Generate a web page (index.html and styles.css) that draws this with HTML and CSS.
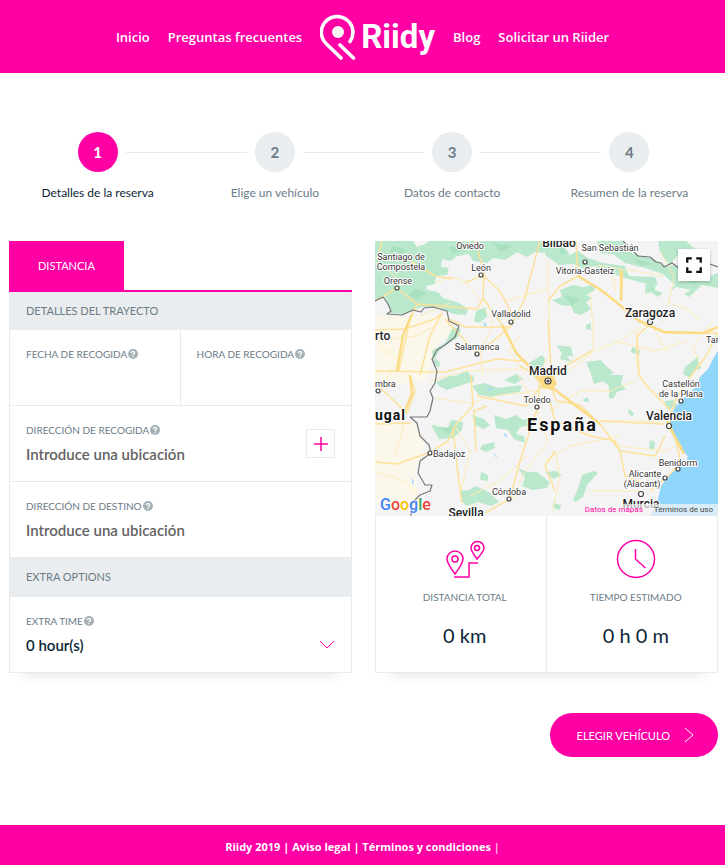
FILE: index.html
```html
<!DOCTYPE html>
<html lang="es">
<head>
<meta charset="utf-8">
<meta name="viewport" content="width=device-width, initial-scale=1">
<title>Riidy</title>
<link rel="stylesheet" href="styles.css">
</head>
<body>
<svg class="sprite" aria-hidden="true">
  <symbol id="help" viewBox="0 0 10 10">
    <circle cx="5" cy="5" r="5" fill="currentColor"/>
    <path d="M3.300 4a1.600 1.400 0 1 1 2.500 1.100Q5 5.500 5 6.200M5 7.200v1" fill="none" stroke="#fff" stroke-width="1.300"/>
  </symbol>
</svg>

<header class="header">
  <nav class="nav">
    <a href="#">Inicio</a>
    <a href="#">Preguntas frecuentes</a>
    <a href="#" class="logo">
      <svg class="logo-mark" viewBox="0 0 38 46" fill="none" stroke="#fff" stroke-width="3.600" stroke-linecap="round">
        <path d="M21 44L6.500 30A15.800 15.800 0 1 1 30 27.500"/>
        <path d="M20 31L33.500 44"/>
        <circle cx="18" cy="18" r="6" fill="#f7f7f7" stroke="none"/>
      </svg>
      <span class="logo-word">Riidy</span>
    </a>
    <a href="#">Blog</a>
    <a href="#">Solicitar un Riider</a>
  </nav>
</header>

<main class="page">
  <ol class="steps">
    <li class="step step-active"><span class="step-row"><span class="step-dot">1</span></span><span>Detalles de la reserva</span></li>
    <li class="step"><span class="step-row"><span class="step-dot">2</span></span><span>Elige un vehículo</span></li>
    <li class="step"><span class="step-row"><span class="step-dot">3</span></span><span>Datos de contacto</span></li>
    <li class="step"><span class="step-row"><span class="step-dot">4</span></span><span>Resumen de la reserva</span></li>
  </ol>

  <form class="booking">
    <section class="column">
      <div class="tabs"><button type="button" class="tab">DISTANCIA</button></div>
      <div class="card">
        <h2 class="section-title">DETALLES DEL TRAYECTO</h2>
        <div class="pair">
          <div class="field">
            <label for="date">FECHA DE RECOGIDA <svg class="help"><use href="#help"/></svg></label>
            <input id="date" type="text">
          </div>
          <div class="field">
            <label for="time">HORA DE RECOGIDA <svg class="help"><use href="#help"/></svg></label>
            <input id="time" type="text">
          </div>
        </div>
        <div class="field-row">
          <div class="field">
            <label for="from">DIRECCIÓN DE RECOGIDA <svg class="help"><use href="#help"/></svg></label>
            <input id="from" type="text" placeholder="Introduce una ubicación">
          </div>
          <button type="button" class="add" aria-label="Añadir parada">
            <svg viewBox="0 0 16 16" stroke="currentColor" stroke-width="1.500"><path d="M8 1v14M1 8h14"/></svg>
          </button>
        </div>
        <div class="field-row">
          <div class="field">
            <label for="to">DIRECCIÓN DE DESTINO <svg class="help"><use href="#help"/></svg></label>
            <input id="to" type="text" placeholder="Introduce una ubicación">
          </div>
        </div>
        <h2 class="section-title section-title-tall">EXTRA OPTIONS</h2>
        <div class="field">
          <label for="extra">EXTRA TIME <svg class="help"><use href="#help"/></svg></label>
          <div class="select">
            <select id="extra"><option>0 hour(s)</option><option>1 hour(s)</option><option>2 hour(s)</option></select>
            <svg class="chevron" viewBox="0 0 16 10" fill="none" stroke="currentColor"><path d="M1 1l7 7 7-7"/></svg>
          </div>
        </div>
      </div>
    </section>

    <section class="column">
      <div class="map">
        <svg class="map-canvas" viewBox="0 0 343 275" preserveAspectRatio="xMidYMid slice">
          <rect width="343" height="275" fill="#f4f4f4"/>
          <g fill="#fbf7ea">
            <path d="M0 74l30 2 40-3 10 14-20 20-8 33-52 6z"/>
            <path d="M0 180l40 2 10 20-10 30 5 30-45 0z"/>
          </g>
          <g fill="#b9e8cc">
            <path d="M0 0H38L42 6L50 3L54 0H173V12L160 11L152 16L142 11L130 19L118 17L112 22L98 20L94 13L82 15L76 20L67 18L66 26L74 27L72 34L61 35L60 43L51 45L52 49L63 51L68 57L84 62L93 68L91 74L79 73L69 69L58 66L47 66L38 69L28 73L15 72L16 67L9 56L0 60z"/>
            <path d="M170 0H182L195 14L203 10L213 17L228 22L250 25L254 35L280 36L283 44L268 42L246 36L232 30L219 25L210 28L199 23L184 24L170 14z"/>
            <path d="M222 0L247 0L258 13L276 17L291 25L303 24L309 33L335 35L343 32V47L327 44L314 56L309 53L316 49L301 46L293 52L300 44L288 33L270 27L250 22L238 13L225 12z"/>
            <path d="M283 0h28l14 12-22 2-8 10-10-12z"/>
            <path d="M185 49L198 44L208 46L217 44L220 49L211 54L218 57L211 61L216 68L206 74L199 72L196 65L185 64L177 59L187 56"/>
            <path d="M271 39l10-1-1 11 8 3-5 4-7-5-6 2z"/>
            <path d="M181 104l15 2 2 9-6 0 4 6-11-3 2-6z"/>
            <path d="M211 84l5-2v7l-5-1zM257 106l8 3-1 5-8-3z"/>
            <path d="M211 121l15-2 4 5 9 8-5 2 5 8-10-2-10 3-4-13z"/>
            <path d="M308 133l2-7 14-11-1 9 4 3-9 3-3 7z"/>
            <path d="M101 70l10-4 1 10-8 6-5-2z"/>
            <path d="M78 86l8 2-3 8-11 7-8 7-4 8 5 3-1 6-5-4-2-13 14-9z"/>
            <path d="M154 122l13-8 3 4-3 13-9-3zM82 134l11-4 3 9-12 0z"/>
            <path d="M61 141l14-6 23-1 1 6-15 5-12 4-8-4z"/>
            <path d="M97 145l12-3 14 5 24-3-2 7-15 2-12 3-14-2z"/>
            <path d="M129 139l12-6 7 5-9 5z"/>
            <path d="M56 184l17 3 3-8 12 2-1 8-9 8-14 1z"/>
            <path d="M97 174l12 4 6 6-6 4-9-4z"/>
            <path d="M119 174l12 4 10-4 7 5 12-3-3 8-12 2-4 7 8 2 1 7-11-4-6-9-12-2z"/>
            <path d="M107 204l12-3 1 6-9 4-6-3zM106 231l7 3 0 6-8-1z"/>
            <path d="M85 250l10-1 5-4 14 6 10 10-8 4-13-4-11 4-6-5z"/>
            <path d="M143 227l9 4 10 0 13 10-3 6-14 2-11-4 3-8z"/>
            <path d="M231 134l17 0-2 9 5 5-9 3-4 7-4-1 0-12-6-5z"/>
            <path d="M289 160l10-1 4 7-10 2zM275 199l5 2-1 8-5-2z"/>
            <path d="M207 234l12-4 4 2-11 12-4 12-7 5-3-2 6-14z"/>
            <path d="M170 231l11-1 6 4-9 4zM178 262l8 2-1 5-7-2z"/>
            <path d="M208 158l5-2 1 5-5 0zM254 168l5 4-2 4-4-5z"/>
          </g>
          <g fill="#8bd3a8" opacity=".35">
            <path d="M18 5l14 4-8 5-10-3zM40 48l12 4-10 7-8-5zM74 5l14 3-10 5zM118 2l20 3-12 6zM186 4l8 7-10 3zM258 17l20 6-12 2zM310 38l18 2-10 3zM190 55l15 2-8 8zM66 187l15-2-9 8z"/>
          </g>
          <path fill="#90d5fa" d="M343 110L338 118L333 128L325 136L322 145L308 158L299 168L294 178L296 192L305 205L313 216L308 224L295 233L286 245L283 258L275 275H343z"/>
          <g fill="#a8dcff"><path d="M108 80l4 4-2 3zM110 148l8-1-3 3zM128 191l4 3-1 3zM119 212l3 3-1 2zM37 236l2 5-2 3z"/></g>
          <g fill="none" stroke="#fdedb8" stroke-width="1">
            <path d="M0 20L20 35L22 47M60 42L75 36L90 40L102 55L118 82M45 75L75 62M130 60L173 48M118 85L105 110L108 134M0 100L40 95L60 85M5 105L25 120L10 140M55 140L90 130L145 128M150 134L135 110L144 94"/>
            <path d="M173 20L174 80L175 115L160 136M218 110L218 85L215 52M218 110L245 100L270 83M262 90L261 120L264 134M218 112L200 125L176 138M240 50L238 35M294 62L312 68L325 80M293 65L299 36L285 10M338 80L318 105L325 125M222 24L290 35M279 88L293 112M240 100L280 110L312 100"/>
            <path d="M60 157L95 162L120 155L160 150M80 185L95 210L86 250M143 134L160 165L173 200L150 230L137 258M175 170L205 150L235 150L260 140M230 180L295 180M240 205L290 210L300 205M170 220L195 205L245 195M95 255L125 240L152 215M0 230L30 240L45 255M20 215L30 180M178 270L185 235L180 210M215 250L265 250"/>
          </g>
          <g fill="none" stroke="#fce29b" stroke-width="1.500" stroke-linejoin="round">
            <path d="M7 0L2 18M22 47L42 63L102 68L108 57L109 31L100 0M0 60L22 47M42 63L35 78L24 129M0 89L30 88L60 78L67 72M0 130L70 131L122 118L147 120M45 134L55 95L67 72M74 78L90 86L135 86L149 60L165 0M108 57L127 84L142 113L155 125M135 86L110 107L102 113L70 78M35 20L60 35L78 38M90 42L108 34L125 50L138 75M0 142L32 172L40 150L35 134M0 183L36 182M0 221L22 223L53 212M54 212L73 200L82 182L98 165L96 134M78 187L82 225L87 262M101 210L99 170L112 165M102 155L151 165L162 150L173 140"/>
            <path d="M173 140L145 125M173 140L190 125L217 110M203 35L222 47L240 60L265 80L290 92L343 92M203 35L185 45L173 60M203 35L201 0M245 28L246 55M275 83L262 95L264 134M175 145L182 160L205 164L225 183L245 210L250 235L275 245M175 160L180 180L215 195L240 200L245 210L280 215L290 195M225 180L289 183M173 80L177 143M264 134L272 145L296 170M292 184L307 207M180 210L170 225L180 250M165 134L163 165L145 220L135 258L110 272"/>
            <path d="M343 92L331 115L315 136L300 160L294 180L302 204L306 222L291 237L275 250"/>
          </g>
          <g fill="none" stroke="#fbdb84" stroke-width="2.500">
            <path d="M203 35L226 49L246 65L264 80L289 91L329 92L343 86M246 60L247 30M37 73L28 94L22 130M127 84L142 113L157 128L164 140M35 134L37 153L27 177M292 180L301 198L309 213M175 145L225 183"/>
          </g>
          <path d="M164 137l7-4 8 3 3 7-5 6-10-2z" fill="#fbdb84"/>
          <g fill="none" stroke="#777" stroke-width="1.200" stroke-linejoin="round">
            <path d="M0 60L8 56L13 63L16 70L12 73L27 74L38 69L46 71L49 67L58 66L72 70L74 80L84 85L80 96L70 104L62 109L57 118L62 130L60 142L55 150L58 157L55 170L52 176L35 176L42 182L45 195L54 204L56 212L45 220L43 232L50 244L57 244L55 250L45 254L37 262L36 275"/>
            <path d="M248 0L258 10L263 15L275 16L281 21L286 22L289 26L297 22L305 28L322 28L332 22L343 26"/>
          </g>
          <g fill="#fff" stroke="#444" stroke-width="1.200">
            <circle cx="106" cy="34" r="2"/><circle cx="22" cy="47" r="2"/><circle cx="136" cy="81" r="2"/><circle cx="102" cy="113" r="2"/><circle cx="210" cy="21" r="2"/><circle cx="275" cy="81" r="2.500"/><circle cx="162" cy="166" r="2"/><circle cx="3" cy="150" r="2"/><circle cx="306" cy="160" r="2"/><circle cx="294" cy="185" r="2.500"/><circle cx="303" cy="228" r="2"/><circle cx="290" cy="237" r="2"/><circle cx="266" cy="253" r="2.500"/><circle cx="55" cy="212" r="2"/><circle cx="134" cy="258" r="2"/><circle cx="173" cy="140" r="3"/><circle cx="173" cy="140" r="1" fill="#222"/>
          </g>
          <g class="town">
            <text x="95" y="8">Oviedo</text><text x="26" y="19">Santiago de</text><text x="26" y="29">Compostela</text><text x="106" y="30">León</text><text x="23" y="43">Orense</text><text x="136" y="76">Valladolid</text><text x="102" y="109">Salamanca</text><text x="235" y="10">San Sebastián</text><text x="210" y="33">Vitoria-Gasteiz</text><text x="162" y="162">Toledo</text><text x="306" y="146">Castellón</text><text x="306" y="156">de la Plana</text><text x="303" y="225">Benidorm</text><text x="270" y="236">Alicante</text><text x="267" y="246">(Alacant)</text><text x="134" y="254">Córdoba</text>
            <text class="from-edge" x="0" y="146">mbra</text><text class="from-edge" x="331" y="102">Tar</text><text class="from-edge" x="58" y="216">Badajoz</text>
          </g>
          <g class="city">
            <text x="184" y="6">Bilbao</text><text x="275" y="76">Zaragoza</text><text x="173" y="134">Madrid</text><text x="294" y="179">Valencia</text><text x="266" y="267">Murcia</text><text x="91" y="276">Sevilla</text><text class="from-edge" x="0" y="99">rto</text>
          </g>
          <text class="country neighbour" x="0" y="179">ugal</text>
          <text class="country" x="152" y="190">España</text>
        </svg>
        <button type="button" class="fullscreen" aria-label="Pantalla completa">
          <svg viewBox="0 0 16 16" fill="none" stroke="currentColor" stroke-width="2"><path d="M2 6V2h4M10 2h4v4M14 10v4h-4M6 14H2v-4"/></svg>
        </button>
        <span class="google"><span class="g-blue">G</span><span class="g-red">o</span><span class="g-yellow">o</span><span class="g-blue">g</span><span class="g-green">l</span><span class="g-red">e</span></span>
        <div class="credits"><a href="#" class="credits-data">Datos de mapas</a><a href="#">Términos de uso</a></div>
      </div>
      <div class="card stats">
        <div class="stat">
          <svg class="stat-icon" viewBox="0 0 40 40" fill="none" stroke="currentColor" stroke-width="1.500">
            <path d="M10 35Q2 24 2 20a8 8 0 0 1 16 0Q18 24 10 35z"/><circle cx="10" cy="20" r="3"/>
            <path d="M32 20Q26 12 26 9a6.300 6.300 0 0 1 13 0Q39 12 32 20z"/><circle cx="32" cy="9" r="2.500"/>
            <path d="M9 38H24V24H33"/>
          </svg>
          <span class="stat-label">DISTANCIA TOTAL</span>
          <span class="stat-value">0 km</span>
        </div>
        <div class="stat">
          <svg class="stat-icon" viewBox="0 0 40 40" fill="none" stroke="currentColor" stroke-width="1.500">
            <circle cx="20" cy="20" r="18.500"/><path d="M19.500 10V20L29.500 29"/>
          </svg>
          <span class="stat-label">TIEMPO ESTIMADO</span>
          <span class="stat-value">0 h 0 m</span>
        </div>
      </div>
    </section>

    <div class="actions">
      <button type="submit" class="next">ELEGIR VEHÍCULO
        <svg viewBox="0 0 10 16" fill="none" stroke="currentColor"><path d="M1 1l8 7-8 7"/></svg>
      </button>
    </div>
  </form>
</main>

<footer class="footer">
  <span>Riidy 2019 | <a href="#">Aviso legal</a> | <a href="#">Términos y condiciones</a> <span class="bar">|</span></span>
</footer>
</body>
</html>
```

FILE: styles.css
```css
:root {
  --pink: #ff00a5;
  --grey: #e9edef;
  --line: #e8eaeb;
  --slate: #6b7c88;
  --ink: #0c2637;
}

* { box-sizing: border-box; }

body {
  margin: 0;
  min-height: 100vh;
  display: flex;
  flex-direction: column;
  background: #fff;
  color: var(--slate);
  font-family: Lato, "Liberation Sans", sans-serif;
  font-size: 12px;
}

a { color: inherit; text-decoration: none; }
button, input, select { font: inherit; color: inherit; margin: 0; padding: 0; border: 0; background: none; }
button { cursor: pointer; }
.sprite { position: absolute; width: 0; height: 0; }

.header {
  min-height: 73px;
  display: flex;
  align-items: center;
  justify-content: center;
  background: var(--pink);
  color: #fff;
  font: 600 13px/20px "Open Sans", sans-serif;
}
.nav { display: flex; align-items: center; gap: 18px; }
.logo { display: flex; align-items: center; gap: 3px; }
.logo-mark { width: 38px; height: 46px; }
.logo-word { font: 700 33px/40px Roboto, sans-serif; }

.page { padding: 59px 7px 0 9px; }

.steps {
  list-style: none;
  margin: 0;
  padding: 0;
  display: grid;
  grid-template-columns: repeat(4, 1fr);
}
.step { display: grid; gap: 12px; text-align: center; line-height: 18px; }
.step-row { display: flex; align-items: center; gap: 8px; }
.step-row::before, .step-row::after { content: ""; flex: 1; height: 1px; background: var(--line); }
.step:first-child .step-row::before, .step:last-child .step-row::after { background: none; }
.step-dot {
  width: 40px;
  line-height: 40px;
  border-radius: 50%;
  background: var(--grey);
  font-size: 15px;
  font-weight: 700;
}
.step-active { color: var(--ink); }
.step-active .step-dot { background: var(--pink); color: #fff; }

.booking {
  margin-top: 39px;
  display: grid;
  grid-template-columns: 1fr 1fr;
  column-gap: 23px;
  align-items: start;
}

.tabs { border-bottom: 2px solid var(--pink); display: flex; }
.tab { padding: 0 29px; line-height: 49px; font-size: 11px; background: var(--pink); color: #fff; }

.card {
  border: 1px solid var(--line);
  border-top: 0;
  box-shadow: 0 16px 12px -14px rgba(0, 0, 0, .1);
}
.section-title {
  margin: 0;
  padding: 0 16px;
  background: var(--grey);
  font-size: 11px;
  font-weight: 400;
  line-height: 38px;
}
.section-title-tall { line-height: 40px; }

.pair { display: grid; grid-template-columns: calc(50% - 1px) 1fr; border-bottom: 1px solid var(--line); }
.pair .field + .field { border-left: 1px solid var(--line); }
.field { flex: 1; min-width: 0; padding: 16px 16px 15px; display: grid; gap: 4px; }
.field label { font-size: 10px; line-height: 16px; display: flex; align-items: center; gap: 1px; }
.help { width: 10px; height: 10px; color: #a5b0b7; }
.field input, .field select { width: 100%; height: 24px; font-size: 15px; font-weight: 600; outline: 0; }
.field input::placeholder { color: #636363; opacity: 1; }
.field-row { display: flex; align-items: center; }
.field-row + .field-row { border-top: 1px solid var(--line); }
.add {
  width: 29px;
  height: 29px;
  margin-right: 16px;
  display: grid;
  place-items: center;
  border: 1px solid var(--line);
  color: var(--pink);
}
.add svg { width: 16px; height: 16px; }
.select { display: flex; align-items: center; }
.select select { appearance: none; color: var(--ink); }
.chevron { width: 16px; height: 10px; flex: none; color: var(--pink); }

.map { position: relative; height: 275px; overflow: hidden; font-family: Roboto, sans-serif; }
.map-canvas { display: block; width: 100%; height: 100%; }
.map-canvas text { paint-order: stroke; stroke: #fff; stroke-width: 2px; stroke-linejoin: round; text-anchor: middle; }
.map-canvas .from-edge, .map-canvas .country { text-anchor: start; }
.town { font-size: 9px; fill: #333; }
.city { font-size: 12px; font-weight: 500; fill: #222; }
.country { font-size: 18px; font-weight: 700; letter-spacing: 2px; fill: #111; }
.map-canvas .neighbour { font-size: 14px; letter-spacing: 1px; }
.fullscreen {
  position: absolute;
  top: 8px;
  right: 8px;
  width: 32px;
  height: 32px;
  display: grid;
  place-items: center;
  background: #fff;
  color: #111;
  box-shadow: 0 1px 3px rgba(0, 0, 0, .25);
}
.fullscreen svg { width: 18px; height: 18px; }
.google {
  position: absolute;
  left: 5px;
  bottom: 1px;
  font-size: 16px;
  font-weight: 500;
  line-height: 20px;
  text-shadow: 0 0 2px #fff, 0 0 2px #fff;
}
.g-blue { color: #4285f4; }
.g-red { color: #ea4335; }
.g-yellow { color: #fbbc05; }
.g-green { color: #34a853; }
.credits {
  position: absolute;
  right: 0;
  bottom: 0;
  padding: 0 5px;
  display: flex;
  gap: 11px;
  background: rgba(245, 245, 245, .7);
  color: #444;
  font-size: 8px;
  line-height: 12px;
}
.credits-data { color: var(--pink); }

.stats { display: grid; grid-template-columns: calc(50% - 1px) 1fr; }
.stat { padding: 23px 4px 23px 12px; display: grid; justify-items: center; }
.stat + .stat { border-left: 1px solid var(--line); }
.stat-icon { width: 40px; height: 40px; color: var(--pink); }
.stat-label { margin-top: 10px; font-size: 10px; line-height: 16px; }
.stat-value { margin-top: 16px; color: var(--ink); font-size: 20px; line-height: 28px; }

.actions { grid-column: 1 / -1; display: flex; justify-content: flex-end; padding: 40px 0; }
.next {
  height: 44px;
  padding: 0 24px 0 27px;
  display: flex;
  align-items: center;
  gap: 14px;
  border-radius: 22px;
  background: var(--pink);
  color: #fff;
  font-size: 11px;
}
.next svg { width: 10px; height: 16px; }

.footer {
  margin-top: auto;
  padding: 12px 0 8px;
  background: var(--pink);
  color: #fff;
  text-align: center;
  font: 700 11px/20px "Open Sans", sans-serif;
}
.bar { font-weight: 400; }
```
